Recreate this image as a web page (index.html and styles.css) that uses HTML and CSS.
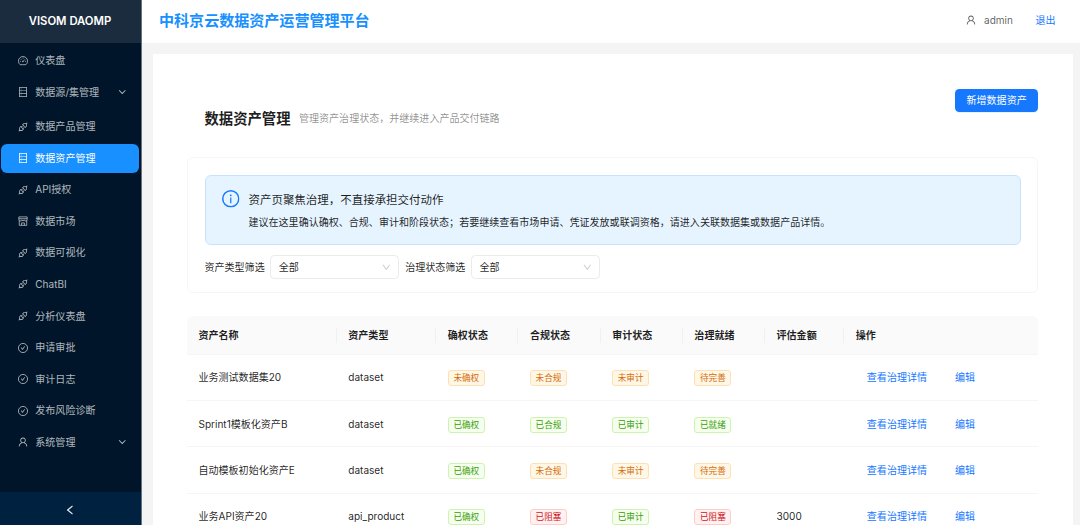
FILE: index.html
```html
<!DOCTYPE html>
<html lang="zh-CN">
<head>
<meta charset="utf-8">
<title>中科京云数据资产运营管理平台</title>
<link rel="stylesheet" href="styles.css">
</head>
<body>
<svg class="sprite" aria-hidden="true">
  <symbol id="database" viewBox="64 64 896 896"><path d="M832 64H192c-17.700 0-32 14.300-32 32v832c0 17.700 14.300 32 32 32h640c17.700 0 32-14.300 32-32V96c0-17.700-14.300-32-32-32zm-600 72h560v208H232V136zm560 480H232V408h560v208zm0 272H232V680h560v208zM304 240a40 40 0 1 0 80 0 40 40 0 1 0-80 0zm0 272a40 40 0 1 0 80 0 40 40 0 1 0-80 0zm0 272a40 40 0 1 0 80 0 40 40 0 1 0-80 0z"/></symbol>
  <symbol id="api" viewBox="64 64 896 896"><path d="M917.7 148.800l-42.400-42.400c-1.600-1.600-3.600-2.300-5.700-2.300s-4.100.8-5.700 2.300l-76.100 76.100a199.270 199.270 0 0 0-112.100-34.300c-51.200 0-102.400 19.500-141.500 58.600L432.300 308.700a8.030 8.030 0 0 0 0 11.300L704 591.700c1.600 1.600 3.600 2.300 5.700 2.300 2 0 4.100-.8 5.700-2.300l101.900-101.900c68.900-69 77-175.700 24.300-253.500l76.100-76.100c3.100-3.200 3.100-8.300 0-11.400zM769.100 441.700l-59.400 59.400-186.800-186.800 59.400-59.400c24.900-24.900 58.100-38.700 93.400-38.700 35.300 0 68.400 13.700 93.400 38.700 24.900 24.900 38.700 58.100 38.700 93.400 0 35.300-13.800 68.400-38.700 93.400zm-190.200 105a8.030 8.030 0 0 0-11.300 0L501 613.300 410.700 523l66.700-66.700c3.100-3.100 3.100-8.200 0-11.300L441 408.600a8.030 8.030 0 0 0-11.300 0L363 475.300l-43-43a7.850 7.850 0 0 0-5.700-2.300c-2 0-4.100.8-5.700 2.300L206.800 534.200c-68.900 69-77 175.700-24.300 253.500l-76.100 76.100a8.030 8.030 0 0 0 0 11.300l42.400 42.400c1.600 1.600 3.600 2.300 5.700 2.300s4.100-.8 5.700-2.300l76.100-76.100c33.700 22.900 72.900 34.300 112.100 34.300 51.200 0 102.400-19.500 141.500-58.600l101.900-101.900c3.100-3.100 3.100-8.200 0-11.300l-43-43 66.700-66.700c3.100-3.100 3.100-8.200 0-11.300l-36.600-36.200zM441.700 769.100a131.320 131.320 0 0 1-93.400 38.700c-35.300 0-68.400-13.700-93.400-38.700a131.320 131.320 0 0 1-38.700-93.400c0-35.300 13.700-68.400 38.700-93.400l59.400-59.400 186.800 186.800-59.400 59.400z"/></symbol>
  <symbol id="user" viewBox="64 64 896 896"><path d="M858.5 763.600a374 374 0 0 0-80.600-119.500 375.630 375.630 0 0 0-119.500-80.600c-.4-.2-.8-.3-1.200-.5C719.500 518 760 444.700 760 362c0-137-111-248-248-248S264 225 264 362c0 82.700 40.500 156 102.800 201.100-.4.2-.8.3-1.200.5-44.800 18.900-85 46-119.500 80.600a375.630 375.630 0 0 0-80.600 119.500A371.700 371.700 0 0 0 136 901.800a8 8 0 0 0 8 8.200h60c4.400 0 7.900-3.500 8-7.800 2-77.200 33-149.500 87.800-204.300 56.700-56.700 132-87.900 212.200-87.900s155.500 31.200 212.200 87.900C779 752.700 810 825 812 902.200c.1 4.400 3.600 7.800 8 7.800h60a8 8 0 0 0 8-8.200c-1-47.800-10.900-94.300-29.500-138.200zM512 534c-45.900 0-89.100-17.900-121.600-50.400S340 407.900 340 362c0-45.900 17.900-89.100 50.400-121.600S466.100 190 512 190s89.100 17.900 121.600 50.400S684 316.100 684 362c0 45.900-17.900 89.100-50.400 121.600S557.900 534 512 534z"/></symbol>
  <symbol id="check" viewBox="64 64 896 896"><circle cx="512" cy="512" r="410" fill="none" stroke="currentColor" stroke-width="76"/><path d="M699 353h-46.900c-10.200 0-19.900 4.900-25.900 13.300L469 584.300l-71.200-98.800c-6-8.300-15.600-13.300-25.900-13.300H325c-6.500 0-10.300 7.400-6.500 12.700l124.600 172.800a31.800 31.800 0 0 0 51.700 0l210.600-292c3.900-5.300.1-12.700-6.400-12.700z"/></symbol>
  <symbol id="dashboard" viewBox="64 64 896 896"><g fill="none" stroke="currentColor" stroke-width="74"><path d="M261 845a410 410 0 1 1 502 0Z" stroke-linejoin="round"/><path d="M512 215v85M232 545h85M707 545h85M310 342l58 58M498 562l190-190"/></g><circle cx="500" cy="562" r="62"/></symbol>
  <symbol id="shop" viewBox="64 64 896 896"><g fill="none" stroke="currentColor" stroke-width="72" stroke-linejoin="round"><path d="M178 484V900H846V484M140 144H884V376a105 105 0 0 1-248 30 138 138 0 0 1-248 0 105 105 0 0 1-248-30ZM140 310H884M388 900V684H636V900"/></g></symbol>
  <symbol id="down" viewBox="64 64 896 896"><path d="M884 256h-75c-5.100 0-9.900 2.500-12.900 6.600L512 654.200 227.900 262.600c-3-4.100-7.800-6.600-12.900-6.600h-75c-6.500 0-10.300 7.400-6.500 12.700l352.600 486.100c12.800 17.600 39 17.600 51.700 0l352.600-486.100c3.900-5.300.1-12.700-6.400-12.700z"/></symbol>
  <symbol id="left" viewBox="64 64 896 896"><path d="M724 218.300V141c0-6.700-7.700-10.400-12.900-6.300L260.300 486.800a31.860 31.860 0 0 0 0 50.300l450.800 352.100c5.300 4.100 12.900.4 12.900-6.300v-77.300c0-4.900-2.300-9.600-6.100-12.600l-360-281 360-281.100c3.800-3 6.100-7.700 6.100-12.600z"/></symbol>
  <symbol id="info" viewBox="64 64 896 896"><circle cx="512" cy="512" r="410" fill="none" stroke="currentColor" stroke-width="76"/><path d="M464 336a48 48 0 1 0 96 0 48 48 0 1 0-96 0zm72 112h-48c-4.400 0-8 3.600-8 8v272c0 4.400 3.600 8 8 8h48c4.400 0 8-3.600 8-8V456c0-4.400-3.600-8-8-8z"/></symbol>
</svg>

<div class="layout">
  <aside class="sider">
    <div class="logo">VISOM DAOMP</div>
    <nav class="menu">
      <a class="item"><svg class="icon"><use href="#dashboard"/></svg><span>仪表盘</span></a>
      <a class="item submenu"><svg class="icon"><use href="#database"/></svg><span>数据源/集管理</span><i class="chevron"></i></a>
      <a class="item"><svg class="icon"><use href="#api"/></svg><span>数据产品管理</span></a>
      <a class="item active"><svg class="icon"><use href="#database"/></svg><span>数据资产管理</span></a>
      <a class="item"><svg class="icon"><use href="#api"/></svg><span>API授权</span></a>
      <a class="item"><svg class="icon"><use href="#shop"/></svg><span>数据市场</span></a>
      <a class="item"><svg class="icon"><use href="#api"/></svg><span>数据可视化</span></a>
      <a class="item"><svg class="icon"><use href="#api"/></svg><span>ChatBI</span></a>
      <a class="item"><svg class="icon"><use href="#api"/></svg><span>分析仪表盘</span></a>
      <a class="item"><svg class="icon"><use href="#check"/></svg><span>申请审批</span></a>
      <a class="item"><svg class="icon"><use href="#check"/></svg><span>审计日志</span></a>
      <a class="item"><svg class="icon"><use href="#check"/></svg><span>发布风险诊断</span></a>
      <a class="item submenu"><svg class="icon"><use href="#user"/></svg><span>系统管理</span><i class="chevron"></i></a>
    </nav>
    <div class="trigger"><svg class="icon"><use href="#left"/></svg></div>
  </aside>

  <div class="main">
    <header class="topbar">
      <h1 class="brand">中科京云数据资产运营管理平台</h1>
      <div class="account">
        <svg class="icon"><use href="#user"/></svg>
        <span class="username">admin</span>
        <a class="link">退出</a>
      </div>
    </header>

    <main class="content">
      <div class="page-head">
        <h2 class="page-title">数据资产管理</h2>
        <span class="page-sub">管理资产治理状态，并继续进入产品交付链路</span>
        <button class="primary">新增数据资产</button>
      </div>

      <section class="panel">
        <div class="alert">
          <svg class="alert-icon"><use href="#info"/></svg>
          <div>
            <div class="alert-title">资产页聚焦治理，不直接承担交付动作</div>
            <div class="alert-text">建议在这里确认确权、合规、审计和阶段状态；若要继续查看市场申请、凭证发放或联调资格，请进入关联数据集或数据产品详情。</div>
          </div>
        </div>
        <div class="filters">
          <span>资产类型筛选</span>
          <div class="select"><span>全部</span><svg class="arrow"><use href="#down"/></svg></div>
          <span>治理状态筛选</span>
          <div class="select"><span>全部</span><svg class="arrow"><use href="#down"/></svg></div>
        </div>
      </section>

      <div class="table">
        <div class="row head">
          <div>资产名称</div><div>资产类型</div><div>确权状态</div><div>合规状态</div><div>审计状态</div><div>治理就绪</div><div>评估金额</div><div>操作</div>
        </div>
        <div class="row">
          <div>业务测试数据集20</div><div>dataset</div>
          <div><span class="tag orange">未确权</span></div><div><span class="tag orange">未合规</span></div><div><span class="tag orange">未审计</span></div><div><span class="tag orange">待完善</span></div>
          <div></div><div class="actions"><a class="link">查看治理详情</a><a class="link">编辑</a></div>
        </div>
        <div class="row">
          <div>Sprint1模板化资产B</div><div>dataset</div>
          <div><span class="tag green">已确权</span></div><div><span class="tag green">已合规</span></div><div><span class="tag green">已审计</span></div><div><span class="tag green">已就绪</span></div>
          <div></div><div class="actions"><a class="link">查看治理详情</a><a class="link">编辑</a></div>
        </div>
        <div class="row">
          <div>自动模板初始化资产E</div><div>dataset</div>
          <div><span class="tag green">已确权</span></div><div><span class="tag orange">未合规</span></div><div><span class="tag orange">未审计</span></div><div><span class="tag orange">待完善</span></div>
          <div></div><div class="actions"><a class="link">查看治理详情</a><a class="link">编辑</a></div>
        </div>
        <div class="row">
          <div>业务API资产20</div><div>api_product</div>
          <div><span class="tag green">已确权</span></div><div><span class="tag red">已阻塞</span></div><div><span class="tag green">已审计</span></div><div><span class="tag red">已阻塞</span></div>
          <div>3000</div><div class="actions"><a class="link">查看治理详情</a><a class="link">编辑</a></div>
        </div>
      </div>
    </main>
  </div>
</div>
</body>
</html>
```

FILE: styles.css
```css
* { box-sizing: border-box; }

body {
  margin: 0;
  height: 525px;
  overflow: hidden;
  background: #f4f4f4;
  color: rgba(0, 0, 0, 0.88);
  font: 10.04px/15.8px Inter, "Noto Sans CJK SC", sans-serif;
}

.sprite { display: none; }
.icon { flex: none; width: 10px; height: 10px; fill: currentColor; }
.link { color: #1677ff; }

.layout { display: flex; height: 525px; }

/* Sidebar */
.sider {
  display: flex;
  flex-direction: column;
  flex: none;
  width: 142px;
  border-right: 1px solid #667380;
  background: #001529;
}
.logo {
  height: 43px;
  padding-right: 1px;
  background: #1a2c3e;
  color: #fff;
  font-size: 11.3px;
  font-weight: 600;
  line-height: 42px;
  text-align: center;
}
.menu { flex: 1; padding: 3.3px 2.5px 0 1px; }
.item {
  display: flex;
  align-items: center;
  height: 28.7px;
  margin-bottom: 2.87px;
  padding: 0 12px 0 17px;
  border-radius: 6px;
  color: rgba(255, 255, 255, 0.7);
}
.item .icon { margin-right: 7.3px; }
.item span { padding-top: 1px; }
.item.submenu { margin-bottom: 5.8px; }
.item.active { background: #1890ff; color: #fff; }
.chevron {
  width: 4.5px;
  height: 4.5px;
  margin: -4px 2.5px 0 auto;
  border: solid currentColor;
  border-width: 0 1px 1px 0;
  transform: rotate(45deg);
}
.trigger {
  display: flex;
  align-items: center;
  justify-content: center;
  height: 33px;
  padding: 2px 2px 0 0;
  background: #002140;
  color: #fff;
}
.trigger .icon { stroke: currentColor; stroke-width: 30px; }

/* Header */
.main { flex: 1; min-width: 0; overflow: hidden; }
.topbar {
  display: flex;
  align-items: center;
  justify-content: space-between;
  height: 43px;
  padding: 0 24.5px 2px 17px;
  background: #fff;
}
.brand { margin: 0; color: #1890ff; font-size: 15.06px; font-weight: 600; }
.account { display: flex; align-items: center; color: rgba(0, 0, 0, 0.65); }
.username { margin: 0 22.5px 0 8.5px; }

/* Page */
.content {
  height: 520px;
  margin: 11px 7.5px 0 10.5px;
  padding: 35px 34.5px 0;
  background: #fff;
}
.page-head {
  display: flex;
  align-items: center;
  height: 68px;
  padding-left: 17.5px;
}
.page-title { margin: -9px 8.5px 0 0; font-size: 14.34px; font-weight: 600; }
.page-sub { margin-top: -9px; color: rgba(0, 0, 0, 0.45); }
.primary {
  align-self: flex-start;
  height: 23px;
  margin-left: auto;
  padding: 0 11.3px;
  border: 0;
  border-radius: 4.3px;
  background: #1677ff;
  box-shadow: 0 1px 0 rgba(5, 145, 255, 0.1);
  color: #fff;
  font: inherit;
}
.panel {
  height: 136px;
  padding: 17px 16.5px 0 16.5px;
  border: 1px solid #f6f6f6;
  border-radius: 6px;
}
.alert {
  display: flex;
  height: 70px;
  padding: 14px 17px 0 16.5px;
  border: 1px solid #c8e2fd;
  border-radius: 6px;
  background: #e6f4ff;
}
.alert-icon { flex: none; width: 17.5px; height: 17.5px; margin-right: 9px; fill: currentColor; color: #1677ff; }
.alert-title { padding-top: 1px; margin-bottom: 6px; font-size: 11.47px; line-height: 18px; }
.alert-text { white-space: nowrap; }
.filters { display: flex; align-items: center; margin-top: 10px; }
.filters span { padding-top: 1px; }
.select {
  display: flex;
  align-items: center;
  justify-content: space-between;
  width: 129px;
  height: 24px;
  margin: 0 6px 0 5.5px;
  padding: 0 7.5px;
  border: 1px solid #ebebeb;
  border-radius: 4.3px;
}
.arrow { width: 8.6px; height: 8.6px; fill: rgba(0, 0, 0, 0.25); }

/* Table */
.table { margin-top: 23px; }
.row {
  display: grid;
  grid-template-columns: 149.8px 99.5px 82.2px 82.2px 82.2px 82.2px 79.3px 1fr;
  align-items: center;
  height: 46.2px;
  padding-top: 1.6px;
  border-bottom: 1px solid #f5f5f5;
}
.row > div { padding-left: 11.5px; white-space: nowrap; }
.row.head {
  height: 39px;
  padding-top: 1px;
  border-radius: 5.7px 5.7px 0 0;
  background: #fafafa;
  font-weight: 600;
}
.row.head > div:not(:last-child) { border-right: 1px solid #f0f0f0; }
.row > .actions { display: flex; gap: 28px; padding-left: 22.5px; }
.tag {
  display: block;
  width: 37px;
  height: 16px;
  border: 1px solid;
  border-radius: 3px;
  font-size: 8.6px;
  line-height: 14.5px;
  text-align: center;
}
.orange { border-color: #ffe0b5; background: #fff7e6; color: #d46b08; }
.green { border-color: #ccf3b0; background: #f6ffed; color: #389e0d; }
.red { border-color: #ffccc7; background: #fff1f0; color: #cf1322; }
```
